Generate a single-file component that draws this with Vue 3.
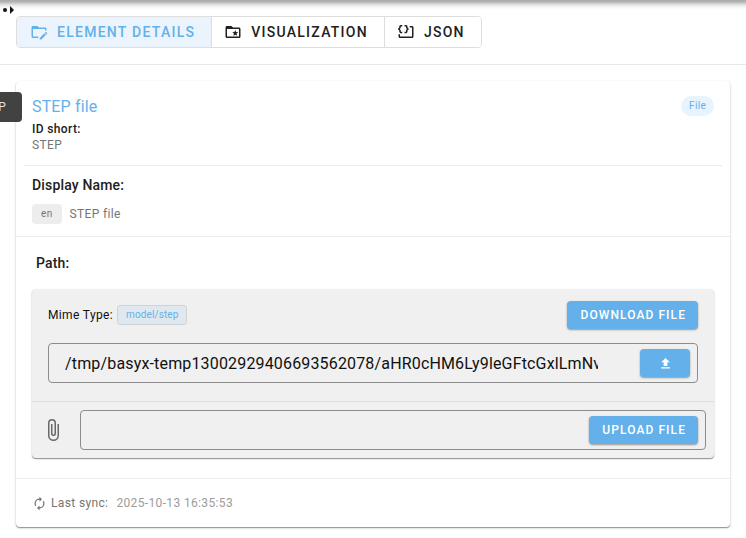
<script setup>
import { ref } from 'vue'

const tab = ref('details')
const filePath = ref('/tmp/basyx-temp13002929406693562078/aHR0cHM6Ly9leGFtcGxlLmNvbS9zdGVw')
const newFile = ref('')

const tabs = [
  {
    id: 'details',
    label: 'Element Details',
    icon: 'M4 18H11V20H4C2.9 20 2 19.1 2 18V6C2 4.9 2.9 4 4 4H10L12 6H20C21.1 6 22 6.9 22 8V10.2C21 9.9 20.4 10 20 10.4V8H4V18M22.85 13.47L21.53 12.15C21.33 11.95 21 11.95 20.83 12.15L19.83 13.1L21.85 15.17L22.85 14.17C23.05 14 23.05 13.67 22.85 13.47M13 19.96V22H15.04L21.17 15.88L19.13 13.83L13 19.96Z'
  },
  {
    id: 'visualization',
    label: 'Visualization',
    icon: 'M20 6H12L10 4H4C2.9 4 2 4.9 2 6V18C2 19.1 2.9 20 4 20H20C21.1 20 22 19.1 22 18V8C22 6.9 21.1 6 20 6M20 18H4V8H20V18M12.5 17L15 15.5L17.5 17L16.8 14.1L19 12.2L16.1 12L15 9.3L13.9 12L11 12.2L13.2 14.1L12.5 17Z'
  },
  {
    id: 'json',
    label: 'JSON',
    icon: 'M7 2.5H4.5L3 4V6L1 8L3 10V12L4.5 13.5H7V11.5H5V9.5L3.7 8L5 6.5V4.5H7V2.5M10 2.5H12.5L14 4V6L16 8L14 10V12L12.5 13.5H10V11.5H12V9.5L13.3 8L12 6.5V4.5H10V2.5M22 6V18C22 19.11 21.11 20 20 20H4C2.9 20 2 19.11 2 18V15H4V18H20V6H17V4H20C21.11 4 22 4.89 22 6Z'
  }
]
</script>

<template>
  <main class="page">
    <div class="bar-shadow"></div>
    <svg class="grip" viewBox="0 0 12 8" aria-hidden="true">
      <circle cx="2" cy="4" r="2" />
      <path d="M7 0L11 4L7 8Z" />
    </svg>

    <header class="toolbar">
      <nav class="tabs">
        <button
          v-for="t in tabs"
          :key="t.id"
          type="button"
          class="tab"
          :class="{ active: tab === t.id }"
          @click="tab = t.id"
        >
          <svg viewBox="0 0 24 24" aria-hidden="true"><path :d="t.icon" /></svg>
          <span>{{ t.label }}</span>
        </button>
      </nav>
    </header>

    <div class="tooltip">STEP</div>

    <article class="card">
      <section class="identity">
        <div class="title-row">
          <h1>STEP file</h1>
          <span class="type-chip">File</span>
        </div>
        <h2 class="id-label">ID short:</h2>
        <p class="id-value">STEP</p>
      </section>

      <section class="display-name">
        <h2>Display Name:</h2>
        <p class="lang-row"><span class="lang-chip">en</span><span>STEP file</span></p>
      </section>

      <section class="path">
        <h2>Path:</h2>
        <div class="file-box">
          <div class="file-main">
            <div class="mime-row">
              <span class="mime-label">Mime Type:</span>
              <span class="mime-chip">model/step</span>
              <button type="button" class="btn push">Download File</button>
            </div>
            <div class="field path-field">
              <input v-model="filePath" type="text" aria-label="Path" />
              <button type="button" class="btn icon-btn" aria-label="Update path">
                <svg viewBox="0 0 24 24" aria-hidden="true">
                  <path d="M9 16V10H5L12 3L19 10H15V16H9M5 20V18H19V20H5Z" />
                </svg>
              </button>
            </div>
          </div>
          <div class="upload-row">
            <svg class="clip" viewBox="0 0 24 24" aria-hidden="true">
              <path d="M16.5 6V17.5A4 4 0 0 1 12.5 21.5A4 4 0 0 1 8.5 17.5V5A2.5 2.5 0 0 1 11 2.5A2.5 2.5 0 0 1 13.5 5V15.5A1 1 0 0 1 12.5 16.5A1 1 0 0 1 11.5 15.5V6H10V15.5A2.5 2.5 0 0 0 12.5 18A2.5 2.5 0 0 0 15 15.5V5A4 4 0 0 0 11 1A4 4 0 0 0 7 5V17.5A5.5 5.5 0 0 0 12.5 23A5.5 5.5 0 0 0 18 17.5V6H16.5Z" />
            </svg>
            <div class="field">
              <input v-model="newFile" type="text" aria-label="File to upload" />
              <button type="button" class="btn">Upload File</button>
            </div>
          </div>
        </div>
      </section>

      <footer class="sync">
        <svg viewBox="0 0 24 24" aria-hidden="true">
          <path d="M12 6V9L16 5L12 1V4A8 8 0 0 0 4 12C4 13.57 4.46 15.03 5.24 16.26L6.7 14.8C6.25 13.97 6 13 6 12A6 6 0 0 1 12 6M18.76 7.74L17.3 9.2C17.74 10.04 18 11 18 12A6 6 0 0 1 12 18V15L8 19L12 23V20A8 8 0 0 0 20 12C20 10.43 19.54 8.97 18.76 7.74Z" />
        </svg>
        <span class="sync-label">Last sync:</span>
        <time>2025-10-13 16:35:53</time>
      </footer>
    </article>
  </main>
</template>

<style>
body {
  background: #fff;
}
</style>

<style scoped>
* {
  box-sizing: border-box;
}
.page {
  position: relative;
  overflow: hidden;
  padding-bottom: 11px;
  font-family: Roboto, sans-serif;
  letter-spacing: 0.01em;
  color: #212121;
}
svg {
  fill: currentColor;
  flex: none;
}
h1,
h2,
p {
  margin: 0;
}
button,
input {
  font-family: inherit;
}
.bar-shadow {
  position: absolute;
  top: 0;
  left: 0;
  right: 0;
  height: 10px;
  background: linear-gradient(#a9a9a9, #b6b6b6 20%, #dedede 45%, #f6f6f6 70%, #fff);
}
.grip {
  position: absolute;
  top: 6px;
  left: 3px;
  width: 12px;
  height: 8px;
  color: #111;
}
.toolbar {
  display: flex;
  padding: 16px;
  border-bottom: 1px solid #e8e8e8;
}
.tabs {
  display: flex;
  height: 32px;
  border: 1px solid #dedede;
  border-radius: 4px;
  overflow: hidden;
}
.tab {
  display: flex;
  align-items: center;
  gap: 9px;
  padding: 0 16px 0 13px;
  border: 0;
  background: #fff;
  color: #212121;
  font-size: 14px;
  font-weight: 500;
  letter-spacing: 0.09em;
  text-transform: uppercase;
}
.tab + .tab {
  border-left: 1px solid #dedede;
  padding-left: 12px;
}
.tab svg {
  width: 18px;
  height: 18px;
}
.tab.active {
  background: #ebf4fc;
  color: #64b0ea;
}
.tooltip {
  position: absolute;
  top: 92px;
  left: -32px;
  width: 54px;
  height: 30px;
  padding-right: 16px;
  border-radius: 4px;
  background: #424242;
  color: #e0e0e0;
  font-size: 12px;
  line-height: 30px;
  text-align: right;
}
.card {
  margin: 16px 16px 0;
  border-radius: 4px;
  box-shadow: 0 1px 1px #949494, 0 1px 3px #d8d8d8;
}
.identity {
  margin: 0 8px;
  padding: 13px 8px;
  border-bottom: 1px solid #ececec;
}
.title-row {
  display: flex;
  align-items: center;
  justify-content: space-between;
  height: 24px;
  margin-bottom: 2px;
}
h1 {
  color: #64b0ea;
  font-size: 16px;
  font-weight: 400;
}
.type-chip {
  padding: 0 8px;
  border-radius: 10px;
  background: #e8f4fd;
  color: #64b0ea;
  font-size: 10px;
  letter-spacing: 0.03em;
  line-height: 20px;
}
.id-label {
  font-size: 12px;
  font-weight: 500;
  letter-spacing: 0.03em;
  line-height: 18px;
}
.id-value {
  color: #757575;
  font-size: 12px;
  letter-spacing: 0.03em;
  line-height: 14px;
}
.display-name {
  padding: 9px 16px 12px;
  border-bottom: 1px solid #ececec;
}
.display-name h2,
.path h2 {
  font-size: 14px;
  font-weight: 500;
  line-height: 20px;
}
.lang-row {
  display: flex;
  align-items: center;
  gap: 8px;
  margin-top: 9px;
  color: #757575;
  font-size: 12px;
  letter-spacing: 0.03em;
  line-height: 20px;
}
.lang-chip {
  padding: 0 9px;
  border-radius: 4px;
  background: #ededed;
  font-size: 10px;
}
.path {
  padding: 16px 16px 20px;
  border-bottom: 1px solid #ececec;
}
.path h2 {
  padding-left: 4px;
}
.file-box {
  margin-top: 16px;
  border-radius: 4px;
  background: #f0f0f0;
  box-shadow: 0 1px 1px #949494, 0 1px 2px #d8d8d8;
}
.file-main {
  padding: 12px 16px 18px;
  border-bottom: 1px solid #dedede;
}
.mime-row {
  display: flex;
  align-items: center;
  gap: 4px;
  color: #111;
  font-size: 12px;
  letter-spacing: 0.03em;
}
.mime-chip {
  padding: 0 8px;
  border: 1px solid #cfd3d6;
  border-radius: 3px;
  background: #e0e8ef;
  color: #64b0ea;
  font-size: 10px;
  letter-spacing: 0.01em;
  line-height: 18px;
}
.push {
  margin-left: auto;
}
.btn {
  flex: none;
  height: 28px;
  padding: 0 12px 0 13px;
  border: 0;
  border-radius: 4px;
  background: #64b0ea;
  color: #fff;
  font-size: 12px;
  font-weight: 500;
  letter-spacing: 0.09em;
  text-transform: uppercase;
  box-shadow: 0 1px 2px #949494;
}
.icon-btn {
  display: grid;
  place-items: center;
  width: 50px;
  padding: 0;
}
.icon-btn svg {
  width: 15px;
  height: 15px;
}
.field {
  display: flex;
  align-items: center;
  flex: 1;
  min-width: 0;
  height: 40px;
  padding: 0 7px 0 16px;
  border: 1px solid #8c8c8c;
  border-radius: 4px;
}
.field input {
  flex: 1;
  min-width: 0;
  padding: 0;
  border: 0;
  outline: 0;
  background: none;
  color: #111;
  font-size: 16px;
  letter-spacing: 0.01em;
}
.path-field {
  gap: 42px;
  margin-top: 14px;
}
.upload-row {
  display: flex;
  align-items: center;
  gap: 15px;
  padding: 8px;
}
.clip {
  width: 24px;
  height: 24px;
  margin-left: 1px;
  color: #686868;
}
.sync {
  display: flex;
  align-items: center;
  padding: 16px;
  color: #757575;
  font-size: 12px;
  letter-spacing: 0.03em;
  line-height: 16px;
}
.sync svg {
  width: 15px;
  height: 15px;
}
.sync-label {
  margin: 0 8px 0 4px;
}
.sync time {
  color: #9c9c9c;
}
</style>
